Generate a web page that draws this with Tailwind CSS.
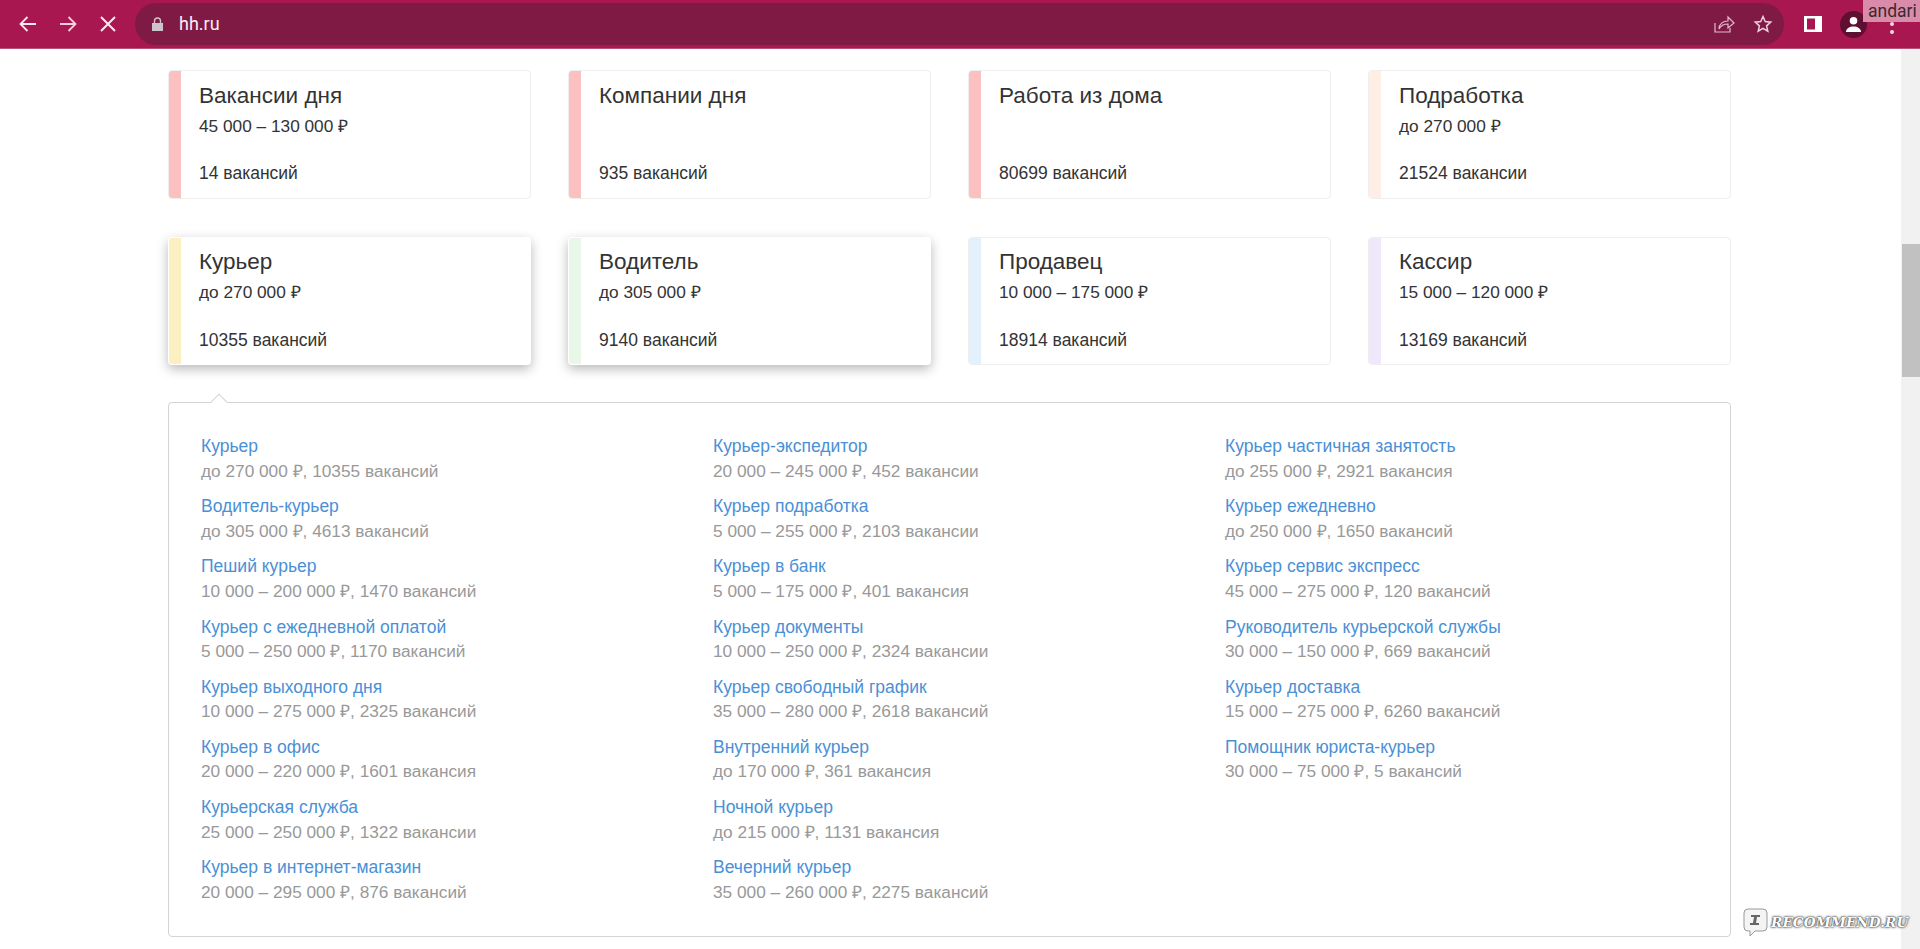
<!doctype html>
<html lang="ru"><head><meta charset="utf-8"><script src="https://cdn.jsdelivr.net/npm/@tailwindcss/browser@4"></script></head>
<body class="m-0 bg-white">
<div class="relative w-[1920px] h-[949px] overflow-hidden flex flex-col font-['Liberation_Sans',Arial,sans-serif] text-[#333]">
  <header class="h-[49px] shrink-0 bg-[#a8174f] border-b border-[#b9537c] flex items-center pl-[18px] text-white">
    <svg class="w-[20px] h-[20px] mr-[20px]" viewBox="0 0 20 20" fill="none" stroke="#fbe9f0" stroke-width="1.8"><path d="M18 10H2.500M9.500 3l-7 7 7 7"/></svg>
    <svg class="w-[20px] h-[20px] mr-[20px]" viewBox="0 0 20 20" fill="none" stroke="#f6cfdd" stroke-width="1.8"><path d="M2 10h15.500M10.500 3l7 7-7 7"/></svg>
    <svg class="w-[20px] h-[20px] mr-[17px]" viewBox="0 0 20 20" fill="none" stroke="#fbe9f0" stroke-width="2"><path d="M3 3l14 14M17 3L3 17"/></svg>
    <div class="w-[1649px] h-[42px] mt-[-1px] shrink-0 rounded-full bg-[#7f1a45] flex items-center pl-[17px] pr-[11px]">
      <svg class="w-[11px] h-[14px] mr-[16px]" viewBox="0 0 11 14" fill="#cfc3cb"><path d="M0 6h11v8H0z"/><path d="M2.500 6V4a3 3 0 0 1 6 0v2" fill="none" stroke="#cfc3cb" stroke-width="1.400"/></svg>
      <span class="text-[#fbeff4] text-[18px] font-['Roboto',sans-serif]">hh.ru</span>
      <svg class="ml-auto w-[22px] h-[22px] mr-[18px]" viewBox="0 0 22 22" fill="none" stroke="#e3b9ca" stroke-width="1.200"><path d="M2 10v9h15v-4"/><path d="M6 16c0-5 4-8 9-8V4l6 6-6 5v-4c-4 0-7 1-9 5z"/></svg>
      <svg class="w-[20px] h-[20px]" viewBox="0 0 24 24" fill="none" stroke="#ecd0dc" stroke-width="1.800"><path d="M12 3l2.700 6.100 6.600.7-5 4.400 1.500 6.500-5.800-3.400-5.800 3.400 1.500-6.500-5-4.400 6.600-.7z"/></svg>
    </div>
    <svg class="ml-[20px] w-[18px] h-[18px] shrink-0" viewBox="0 0 18 18"><path fill-rule="evenodd" fill="#fff" d="M0 1h18v16H0zM3 3.500v11h8v-11z"/></svg>
    <div class="ml-[18px] w-[27px] h-[27px] shrink-0 rounded-full bg-[#5f0f32] flex items-center justify-center">
      <svg class="w-[17px] h-[17px]" viewBox="0 0 18 18" fill="#fff"><circle cx="9" cy="5" r="4"/><path d="M1 17c0-4 4-6 8-6s8 2 8 6z"/></svg>
    </div>
    <div class="ml-[23px] mt-[8px] flex flex-col gap-[4px] shrink-0"><i class="block w-[4px] h-[4px] rounded-full bg-[#f3d9e4]"></i><i class="block w-[4px] h-[4px] rounded-full bg-[#f3d9e4]"></i></div>
  </header>
  <div class="absolute top-0 right-0 w-[57px] h-[22px] bg-[#d98ca9] text-[#3a2a30] text-[17.500px] leading-[22px] pl-[5px] font-['Roboto',sans-serif]">andari</div>

  <div class="flex-1 flex min-h-0">
    <main class="w-[1901px] pl-[168px] pt-[21px]">
      <div class="w-[1563px] grid grid-cols-[363px_363px_363px_363px] grid-rows-[129px_128px] gap-x-[37px] gap-y-[38px]">

        <a class="flex rounded-[4px] border border-[#eeeeee] bg-white overflow-hidden"><span class="w-[12px] bg-[#fcc0c0] shrink-0"></span><span class="pl-[18px] pt-[12px] flex flex-col"><span class="text-[22.500px] leading-[26px]">Вакансии дня</span><span class="text-[17.250px] leading-[20px] mt-[7px]">45 000 – 130 000 ₽</span><span class="text-[17.500px] leading-[20px] mt-[27px]">14 вакансий</span></span></a>
        <a class="flex rounded-[4px] border border-[#eeeeee] bg-white overflow-hidden"><span class="w-[12px] bg-[#fcc0c0] shrink-0"></span><span class="pl-[18px] pt-[12px] flex flex-col"><span class="text-[22.500px] leading-[26px]">Компании дня</span><span class="text-[17.250px] leading-[20px] mt-[7px]">&nbsp;</span><span class="text-[17.500px] leading-[20px] mt-[27px]">935 вакансий</span></span></a>
        <a class="flex rounded-[4px] border border-[#eeeeee] bg-white overflow-hidden"><span class="w-[12px] bg-[#fcc0c0] shrink-0"></span><span class="pl-[18px] pt-[12px] flex flex-col"><span class="text-[22.500px] leading-[26px]">Работа из дома</span><span class="text-[17.250px] leading-[20px] mt-[7px]">&nbsp;</span><span class="text-[17.500px] leading-[20px] mt-[27px]">80699 вакансий</span></span></a>
        <a class="flex rounded-[4px] border border-[#eeeeee] bg-white overflow-hidden"><span class="w-[12px] bg-[#ffeee4] shrink-0"></span><span class="pl-[18px] pt-[12px] flex flex-col"><span class="text-[22.500px] leading-[26px]">Подработка</span><span class="text-[17.250px] leading-[20px] mt-[7px]">до 270 000 ₽</span><span class="text-[17.500px] leading-[20px] mt-[27px]">21524 вакансии</span></span></a>

        <a class="flex rounded-[4px] border border-transparent bg-white overflow-hidden shadow-[0_4px_12px_rgba(0,0,0,0.28)]"><span class="w-[12px] bg-[#fdf0c0] shrink-0"></span><span class="pl-[18px] pt-[11px] flex flex-col"><span class="text-[22.500px] leading-[26px]">Курьер</span><span class="text-[17.250px] leading-[20px] mt-[7px]">до 270 000 ₽</span><span class="text-[17.500px] leading-[20px] mt-[28px]">10355 вакансий</span></span></a>
        <a class="flex rounded-[4px] border border-transparent bg-white overflow-hidden shadow-[0_4px_12px_rgba(0,0,0,0.28)]"><span class="w-[12px] bg-[#e9f7e8] shrink-0"></span><span class="pl-[18px] pt-[11px] flex flex-col"><span class="text-[22.500px] leading-[26px]">Водитель</span><span class="text-[17.250px] leading-[20px] mt-[7px]">до 305 000 ₽</span><span class="text-[17.500px] leading-[20px] mt-[28px]">9140 вакансий</span></span></a>
        <a class="flex rounded-[4px] border border-[#eeeeee] bg-white overflow-hidden"><span class="w-[12px] bg-[#e3f1fd] shrink-0"></span><span class="pl-[18px] pt-[11px] flex flex-col"><span class="text-[22.500px] leading-[26px]">Продавец</span><span class="text-[17.250px] leading-[20px] mt-[7px]">10 000 – 175 000 ₽</span><span class="text-[17.500px] leading-[20px] mt-[28px]">18914 вакансий</span></span></a>
        <a class="flex rounded-[4px] border border-[#eeeeee] bg-white overflow-hidden"><span class="w-[12px] bg-[#efe8fb] shrink-0"></span><span class="pl-[18px] pt-[11px] flex flex-col"><span class="text-[22.500px] leading-[26px]">Кассир</span><span class="text-[17.250px] leading-[20px] mt-[7px]">15 000 – 120 000 ₽</span><span class="text-[17.500px] leading-[20px] mt-[28px]">13169 вакансий</span></span></a>
      </div>

      <section class="relative mt-[37px] w-[1563px] h-[535px] rounded-[4px] border border-[#d4d4d4] bg-white pl-[32px] pt-[31px] grid grid-cols-[512px_512px_480px] text-[17.500px] leading-[24.500px]">
        <span class="absolute left-[44px] top-[-7px] w-[12px] h-[12px] rotate-45 bg-white border-l border-t border-[#d4d4d4]"></span>
        <div>
          <div class="h-[60.200px]"><a class="block text-[#4a90d6]">Курьер</a><p class="text-[#999] text-[17.250px]">до 270 000 ₽, 10355 вакансий</p></div>
          <div class="h-[60.200px]"><a class="block text-[#4a90d6]">Водитель-курьер</a><p class="text-[#999] text-[17.250px]">до 305 000 ₽, 4613 вакансий</p></div>
          <div class="h-[60.200px]"><a class="block text-[#4a90d6]">Пеший курьер</a><p class="text-[#999] text-[17.250px]">10 000 – 200 000 ₽, 1470 вакансий</p></div>
          <div class="h-[60.200px]"><a class="block text-[#4a90d6]">Курьер с ежедневной оплатой</a><p class="text-[#999] text-[17.250px]">5 000 – 250 000 ₽, 1170 вакансий</p></div>
          <div class="h-[60.200px]"><a class="block text-[#4a90d6]">Курьер выходного дня</a><p class="text-[#999] text-[17.250px]">10 000 – 275 000 ₽, 2325 вакансий</p></div>
          <div class="h-[60.200px]"><a class="block text-[#4a90d6]">Курьер в офис</a><p class="text-[#999] text-[17.250px]">20 000 – 220 000 ₽, 1601 вакансия</p></div>
          <div class="h-[60.200px]"><a class="block text-[#4a90d6]">Курьерская служба</a><p class="text-[#999] text-[17.250px]">25 000 – 250 000 ₽, 1322 вакансии</p></div>
          <div class="h-[60.200px]"><a class="block text-[#4a90d6]">Курьер в интернет-магазин</a><p class="text-[#999] text-[17.250px]">20 000 – 295 000 ₽, 876 вакансий</p></div>
        </div>
        <div>
          <div class="h-[60.200px]"><a class="block text-[#4a90d6]">Курьер-экспедитор</a><p class="text-[#999] text-[17.250px]">20 000 – 245 000 ₽, 452 вакансии</p></div>
          <div class="h-[60.200px]"><a class="block text-[#4a90d6]">Курьер подработка</a><p class="text-[#999] text-[17.250px]">5 000 – 255 000 ₽, 2103 вакансии</p></div>
          <div class="h-[60.200px]"><a class="block text-[#4a90d6]">Курьер в банк</a><p class="text-[#999] text-[17.250px]">5 000 – 175 000 ₽, 401 вакансия</p></div>
          <div class="h-[60.200px]"><a class="block text-[#4a90d6]">Курьер документы</a><p class="text-[#999] text-[17.250px]">10 000 – 250 000 ₽, 2324 вакансии</p></div>
          <div class="h-[60.200px]"><a class="block text-[#4a90d6]">Курьер свободный график</a><p class="text-[#999] text-[17.250px]">35 000 – 280 000 ₽, 2618 вакансий</p></div>
          <div class="h-[60.200px]"><a class="block text-[#4a90d6]">Внутренний курьер</a><p class="text-[#999] text-[17.250px]">до 170 000 ₽, 361 вакансия</p></div>
          <div class="h-[60.200px]"><a class="block text-[#4a90d6]">Ночной курьер</a><p class="text-[#999] text-[17.250px]">до 215 000 ₽, 1131 вакансия</p></div>
          <div class="h-[60.200px]"><a class="block text-[#4a90d6]">Вечерний курьер</a><p class="text-[#999] text-[17.250px]">35 000 – 260 000 ₽, 2275 вакансий</p></div>
        </div>
        <div>
          <div class="h-[60.200px]"><a class="block text-[#4a90d6]">Курьер частичная занятость</a><p class="text-[#999] text-[17.250px]">до 255 000 ₽, 2921 вакансия</p></div>
          <div class="h-[60.200px]"><a class="block text-[#4a90d6]">Курьер ежедневно</a><p class="text-[#999] text-[17.250px]">до 250 000 ₽, 1650 вакансий</p></div>
          <div class="h-[60.200px]"><a class="block text-[#4a90d6]">Курьер сервис экспресс</a><p class="text-[#999] text-[17.250px]">45 000 – 275 000 ₽, 120 вакансий</p></div>
          <div class="h-[60.200px]"><a class="block text-[#4a90d6]">Руководитель курьерской службы</a><p class="text-[#999] text-[17.250px]">30 000 – 150 000 ₽, 669 вакансий</p></div>
          <div class="h-[60.200px]"><a class="block text-[#4a90d6]">Курьер доставка</a><p class="text-[#999] text-[17.250px]">15 000 – 275 000 ₽, 6260 вакансий</p></div>
          <div class="h-[60.200px]"><a class="block text-[#4a90d6]">Помощник юриста-курьер</a><p class="text-[#999] text-[17.250px]">30 000 – 75 000 ₽, 5 вакансий</p></div>
        </div>
      </section>
    </main>
    <aside class="w-[19px] bg-[#f1f1f1] pt-[195px]"><div class="w-[18px] ml-[1px] h-[133px] bg-[#c1c1c1]"></div></aside>
  </div>

  <div class="absolute left-[1743px] top-[908px] flex items-center gap-[3px] text-white font-bold italic text-[13.700px] font-['DejaVu_Serif',serif] [text-shadow:0_0_3px_#444,0_0_2px_#444,0_0_1px_#444]">
    <svg class="w-[25px] h-[29px]" viewBox="0 0 25 29"><path fill="#f4f4f4" stroke="#999" d="M5 1h15a4 4 0 0 1 4 4v14a4 4 0 0 1-4 4h-8l-5 5v-5H5a4 4 0 0 1-4-4V5a4 4 0 0 1 4-4z"/><path fill="#666" d="M8 7h9v2h-3l-1 6h3v2H7v-2h3l1-6H8z"/></svg>
    <span>RECOMMEND.RU</span>
  </div>
</div>
</body></html>
